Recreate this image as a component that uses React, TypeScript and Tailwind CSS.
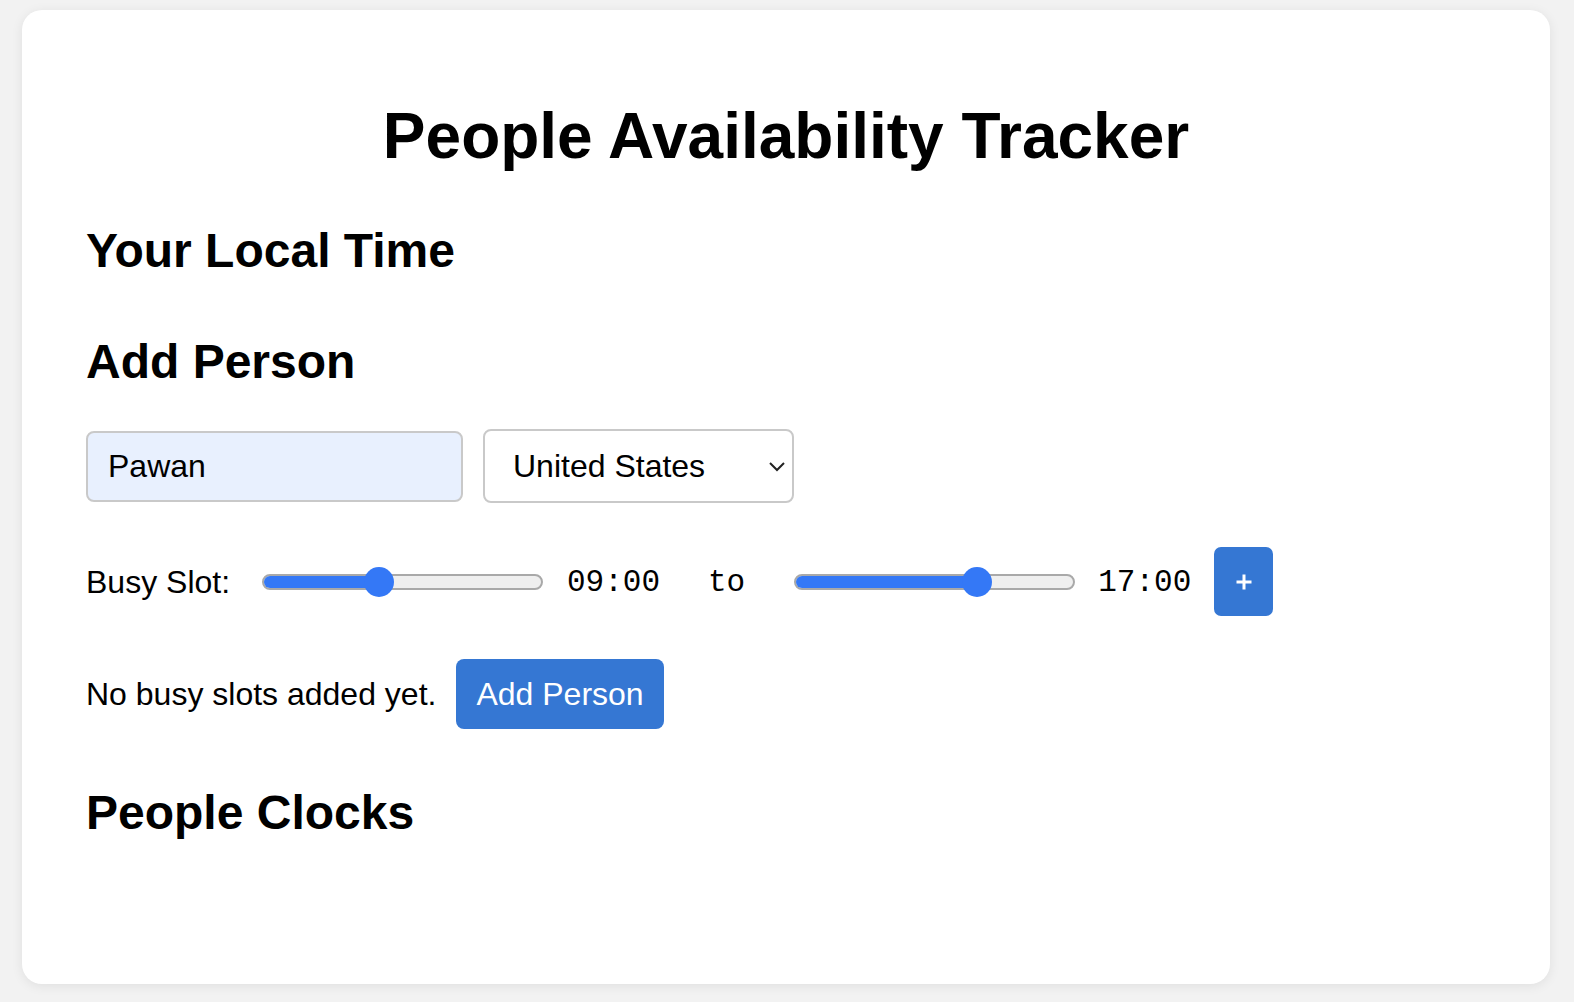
import React from "react";

const sans = { fontFamily: '"Liberation Sans", Arial, sans-serif' };
const mono = { fontFamily: '"Liberation Mono", "Courier New", monospace' };

function Slider({ pos }: { pos: number }) {
  return (
    <div className="relative h-[32px] w-[281px] flex items-center shrink-0">
      <div className="relative h-[16px] w-full rounded-full border-2 border-[#a9a9a9] bg-[#efefef] overflow-hidden">
        <div
          className="absolute left-0 top-0 h-full bg-[#3478f6]"
          style={{ width: pos }}
        />
      </div>
      <div
        className="absolute top-[1px] h-[30px] w-[30px] rounded-full bg-[#3478f6]"
        style={{ left: pos - 15 }}
      />
    </div>
  );
}

export default function App() {
  return (
    <div className="min-h-[1002px] w-full bg-[#f2f2f2] pt-[10px] pl-[22px] pr-[24px]" style={sans}>
      <div className="h-[974px] w-[1528px] rounded-[20px] bg-white shadow-[0_2px_12px_rgba(0,0,0,0.08)] pt-[90px] pl-[64px] pr-[64px] text-black">
        <h1 className="text-center text-[64px] leading-[73px] font-bold">People Availability Tracker</h1>
        <h2 className="mt-[50px] text-[48px] leading-[55px] font-bold">Your Local Time</h2>
        <h2 className="mt-[56px] text-[48px] leading-[55px] font-bold">Add Person</h2>

        <div className="mt-[40px] flex items-center h-[74px]">
          <input
            defaultValue="Pawan"
            className="h-[71px] w-[377px] rounded-[8px] border-2 border-[#c9c9c9] bg-[#e8f0fe] pl-[20px] text-[32px] text-black outline-none"
            style={sans}
          />
          <div className="relative ml-[20px] flex h-[74px] w-[311px] items-center rounded-[8px] border-2 border-[#c9c9c9] bg-white pl-[28px] text-[32px]">
            <span>United States</span>
            <svg
              className="absolute right-[6px] top-[29px]"
              width="18"
              height="12"
              viewBox="0 0 18 12"
            >
              <path d="M2 3 L9 10 L16 3" fill="none" stroke="#222" strokeWidth="2" />
            </svg>
          </div>
        </div>

        <div className="mt-[44px] flex items-center h-[69px] text-[32px]">
          <span className="w-[143px] shrink-0 whitespace-nowrap">Busy Slot:</span>
          <div className="ml-[33px]">
            <Slider pos={116.5} />
          </div>
          <span className="ml-[24px] pt-[3px] text-[31px]" style={mono}>09:00</span>
          <span className="ml-[48px] pt-[3px] text-[31px]" style={mono}>to</span>
          <div className="ml-[49px]">
            <Slider pos={182.7} />
          </div>
          <span className="ml-[23px] pt-[3px] text-[31px]" style={mono}>17:00</span>
          <button className="ml-[23px] flex h-[69px] w-[59px] items-center justify-center rounded-[7px] bg-[#3577d3]">
            <svg width="18" height="18" viewBox="0 0 18 18">
              <path d="M9 1.5 V16.5 M1.5 9 H16.5" stroke="white" strokeWidth="3" />
            </svg>
          </button>
        </div>

        <div className="mt-[43px] flex items-center h-[70px] text-[32px]">
          <span className="whitespace-nowrap">No busy slots added yet.</span>
          <button
            className="ml-[20px] h-[70px] rounded-[8px] bg-[#3577d3] px-[20px] text-[32px] text-white"
            style={sans}
          >
            Add Person
          </button>
        </div>

        <h2 className="mt-[56px] text-[48px] leading-[55px] font-bold">People Clocks</h2>
      </div>
    </div>
  );
}
